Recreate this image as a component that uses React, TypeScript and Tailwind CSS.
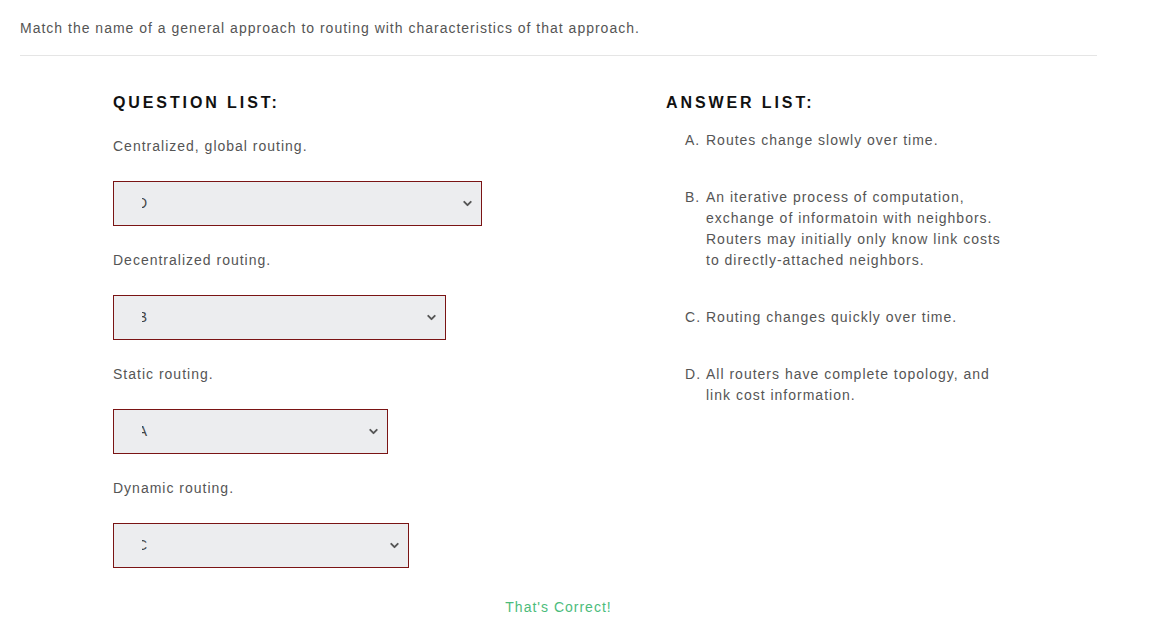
import { ChevronDown } from 'lucide-react';

const questions = [
  { label: 'Centralized, global routing.', value: 'D', width: 'w-[369px]' },
  { label: 'Decentralized routing.', value: 'B', width: 'w-[333px]' },
  { label: 'Static routing.', value: 'A', width: 'w-[275px]' },
  { label: 'Dynamic routing.', value: 'C', width: 'w-[296px]' },
];

const answers = [
  { key: 'A', text: 'Routes change slowly over time.' },
  {
    key: 'B',
    text: 'An iterative process of computation, exchange of informatoin with neighbors. Routers may initially only know link costs to directly-attached neighbors.',
  },
  { key: 'C', text: 'Routing changes quickly over time.' },
  { key: 'D', text: 'All routers have complete topology, and link cost information.' },
];

function FakeSelect({ value, width }: { value: string; width: string }) {
  return (
    <div className={`${width} h-[45px] border border-[#7a1414] bg-[#ecedef] flex items-center justify-between pl-[28px] pr-[7px]`}>
      <span className="w-[6px] overflow-hidden flex justify-end text-[14px] text-[#444]">
        <span>{value}</span>
      </span>
      <ChevronDown size={13} strokeWidth={3.5} className="text-[#555]" />
    </div>
  );
}

export default function App() {
  return (
    <div className="w-[1170px] h-[630px] bg-white font-['Liberation_Sans',Arial,sans-serif] text-[14px] tracking-[1px] text-[#555]">
      <div className="mx-[20px] w-[1077px]">
        <p className="pt-[18px] pb-[17px] leading-[20px]">
          Match the name of a general approach to routing with characteristics of that approach.
        </p>
        <div className="h-px bg-[#e5e5e5]" />

        <div className="flex pl-[93px] pt-[36px]">
          <div className="w-[553px]">
            <h2 className="text-[16px] font-bold tracking-[2.9px] text-[#111] leading-[22px]">QUESTION LIST:</h2>
            <div className="mt-[22px] flex flex-col gap-[24px]">
              {questions.map((q) => (
                <div key={q.label}>
                  <p className="leading-[20px]">{q.label}</p>
                  <div className="mt-[25px]">
                    <FakeSelect value={q.value} width={q.width} />
                  </div>
                </div>
              ))}
            </div>
          </div>

          <div>
            <h2 className="text-[16px] font-bold tracking-[2.9px] text-[#111] leading-[22px]">ANSWER LIST:</h2>
            <div className="mt-[16px] pl-[19px] flex flex-col gap-[36px]">
              {answers.map((a) => (
                <div key={a.key} className="flex leading-[21px]">
                  <span className="w-[21px] shrink-0">{a.key}.</span>
                  <span className="w-[300px]">{a.text}</span>
                </div>
              ))}
            </div>
          </div>
        </div>

        <p className="mt-[29px] text-center text-[#4cbc7b] leading-[20px]">That's Correct!</p>
      </div>
    </div>
  );
}
